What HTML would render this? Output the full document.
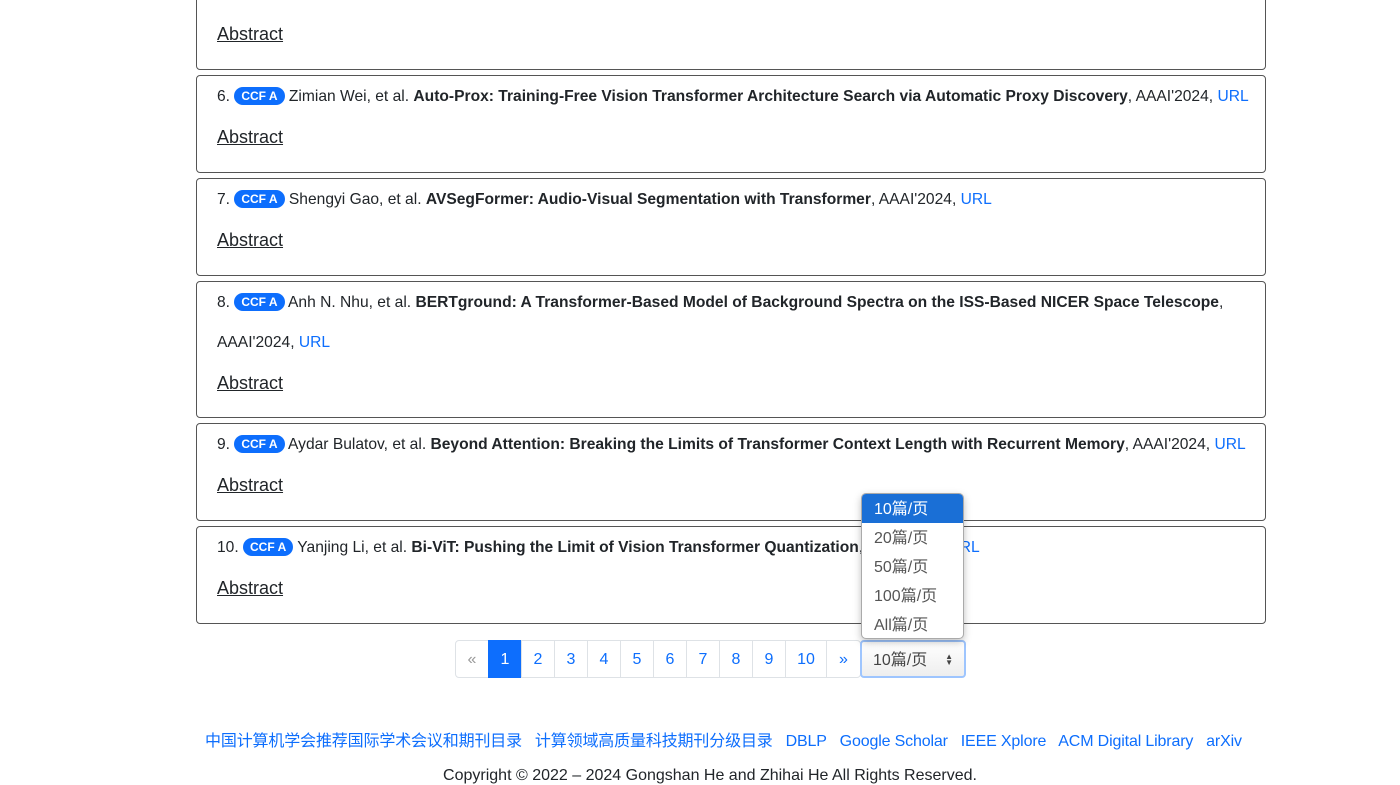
<!DOCTYPE html>
<html><head><meta charset="utf-8"><style>
*{box-sizing:border-box;margin:0;padding:0}
body{width:1400px;height:784px;overflow:hidden;background:#fff;font-family:"Liberation Sans","Noto Sans CJK SC",sans-serif;color:#212529;font-size:16px;position:relative}
.card{position:absolute;left:196px;width:1070px;border:1px solid #555;border-radius:4px}
.l{position:absolute;left:20px;white-space:nowrap;line-height:20px;font-size:15.6px}
.b{display:inline-block;background:#0d6efd;color:#fff;font-size:12px;font-weight:bold;border-radius:10px;padding:2px 7px;line-height:14px;vertical-align:1px}
a{color:#0d6efd;text-decoration:none}
.ab{text-decoration:underline;color:#212529;font-size:18px}
strong{font-weight:bold}
.pg{position:absolute;top:640px;height:38px;border:1px solid #dee2e6;color:#0d6efd;text-align:center;line-height:38px;font-size:16px}
.dd{position:absolute;left:861px;top:493px;width:103px;height:146px;background:#fff;border:1px solid #aaa;border-radius:5px;box-shadow:0 3px 8px rgba(0,0,0,.25);overflow:hidden}
.dd div{height:29px;line-height:31px;padding-left:12px;color:#555;font-size:16px}
</style></head><body>
<div class="card" style="top:-10px;height:80px"><span class="l" style="top:33px"><span class="ab">Abstract</span></span></div>
<div class="card" style="top:75px;height:98px"><span class="l" style="top:11px">6. <span class="b">CCF A</span> Zimian Wei, et al. <strong>Auto-Prox: Training-Free Vision Transformer Architecture Search via Automatic Proxy Discovery</strong>, AAAI'2024, <a>URL</a></span><span class="l" style="top:51px"><span class="ab">Abstract</span></span></div>
<div class="card" style="top:178px;height:98px"><span class="l" style="top:11px">7. <span class="b">CCF A</span> Shengyi Gao, et al. <strong>AVSegFormer: Audio-Visual Segmentation with Transformer</strong>, AAAI'2024, <a>URL</a></span><span class="l" style="top:51px"><span class="ab">Abstract</span></span></div>
<div class="card" style="top:281px;height:137px"><span class="l" style="top:11px">8. <span class="b">CCF A</span> Anh N. Nhu, et al. <strong>BERTground: A Transformer-Based Model of Background Spectra on the ISS-Based NICER Space Telescope</strong>,</span><span class="l" style="top:51px">AAAI'2024, <a>URL</a></span><span class="l" style="top:91px"><span class="ab">Abstract</span></span></div>
<div class="card" style="top:423px;height:98px"><span class="l" style="top:11px">9. <span class="b">CCF A</span> Aydar Bulatov, et al. <strong>Beyond Attention: Breaking the Limits of Transformer Context Length with Recurrent Memory</strong>, AAAI'2024, <a>URL</a></span><span class="l" style="top:51px"><span class="ab">Abstract</span></span></div>
<div class="card" style="top:526px;height:98px"><span class="l" style="top:11px">10. <span class="b">CCF A</span> Yanjing Li, et al. <strong>Bi-ViT: Pushing the Limit of Vision Transformer Quantization</strong>, AAAI'2024, <a>URL</a></span><span class="l" style="top:51px"><span class="ab">Abstract</span></span></div>
<div class="pg" style="left:455px;width:34px;color:#999;border-radius:4px 0 0 4px">«</div>
<div class="pg" style="left:488px;width:34px;background:#0d6efd;color:#fff;border-color:#0d6efd">1</div>
<div class="pg" style="left:521px;width:34px">2</div>
<div class="pg" style="left:554px;width:34px">3</div>
<div class="pg" style="left:587px;width:34px">4</div>
<div class="pg" style="left:620px;width:34px">5</div>
<div class="pg" style="left:653px;width:34px">6</div>
<div class="pg" style="left:686px;width:34px">7</div>
<div class="pg" style="left:719px;width:34px">8</div>
<div class="pg" style="left:752px;width:34px">9</div>
<div class="pg" style="left:785px;width:42px">10</div>
<div class="pg" style="left:826px;width:35px;border-radius:0 4px 4px 0">»</div>
<div style="position:absolute;left:860px;top:640px;width:106px;height:38px;border:2px solid #9ec5fe;border-radius:4px;line-height:38px;padding-left:11px;color:#444;background:linear-gradient(#fff,#eee)">10篇/页<span style="position:absolute;right:11px;top:12px;font-size:8px;line-height:6px">▲<br>▼</span></div>
<div class="dd"><div style="background:#1a6fd6;color:#fff">10篇/页</div><div>20篇/页</div><div>50篇/页</div><div>100篇/页</div><div>All篇/页</div></div>
<div style="position:absolute;top:727px;left:205px;width:1045px;white-space:nowrap;font-size:16px;letter-spacing:-0.15px"><a>中国计算机学会推荐国际学术会议和期刊目录</a>&nbsp;&nbsp; <a>计算领域高质量科技期刊分级目录</a>&nbsp;&nbsp; <a>DBLP</a>&nbsp;&nbsp; <a>Google Scholar</a>&nbsp;&nbsp; <a>IEEE Xplore</a>&nbsp;&nbsp; <a>ACM Digital Library</a>&nbsp;&nbsp; <a>arXiv</a></div>
<div style="position:absolute;top:767px;left:0;width:1420px;text-align:center;font-size:16px">Copyright © 2022 – 2024 Gongshan He and Zhihai He All Rights Reserved.</div>
</body></html>
